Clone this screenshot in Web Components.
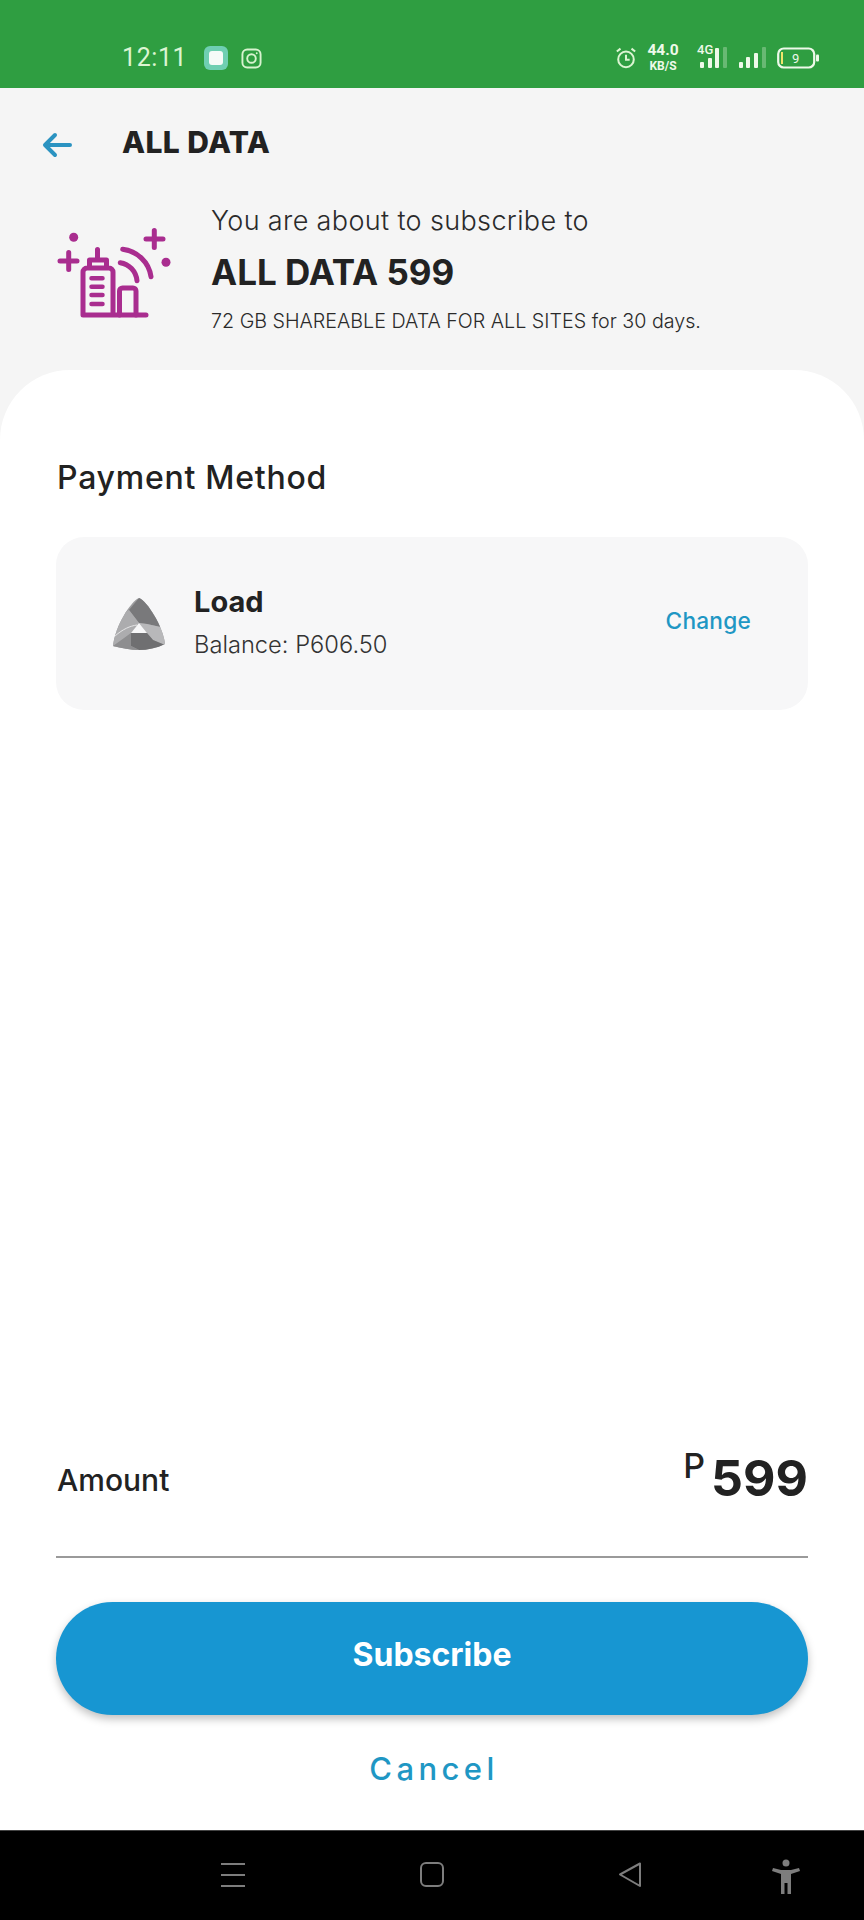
<!DOCTYPE html>
<html>
<head>
<meta charset="utf-8">
<style>
  html, body { margin: 0; padding: 0; background: #fff; }
  body { font-family: Inter, "Noto Sans", sans-serif; color: #222; }
  app-screen { width: 864px; height: 1920px; }
</style>
</head>
<body>

<app-screen>
  <status-bar slot="top"></status-bar>
  <page-header slot="top" title="ALL DATA"></page-header>
  <plan-summary slot="top">
    <span slot="intro">You are about to subscribe to</span>
    <span slot="name">ALL DATA 599</span>
    <span slot="detail">72 GB SHAREABLE DATA FOR ALL SITES for 30 days.</span>
  </plan-summary>
  <payment-card>
    <span slot="name">Load</span>
    <span slot="balance">Balance: P606.50</span>
    <span slot="action">Change</span>
  </payment-card>
  <amount-row slot="bottom" value="599"></amount-row>
  <subscribe-actions slot="bottom"></subscribe-actions>
  <nav-bar slot="nav"></nav-bar>
</app-screen>

<script>
class AppScreen extends HTMLElement {
  constructor() {
    super();
    this.attachShadow({ mode: 'open' });
    this.shadowRoot.innerHTML = `
      <style>
        :host { display: flex; flex-direction: column; background: #f5f5f5; overflow: hidden; }
        .sheet {
          flex: 1;
          display: flex;
          flex-direction: column;
          background: #fff;
          border-radius: 70px 70px 0 0;
          padding: 0 56px;
        }
        .sheet h2 {
          margin: 90px 0 41px 1px;
          font: 500 32px/36px Inter, sans-serif;
          letter-spacing: .75px;
          color: #222;
        }
        .fill { flex: 1; }
      </style>
      <slot name="top"></slot>
      <div class="sheet">
        <h2>Payment Method</h2>
        <slot></slot>
        <div class="fill"></div>
        <slot name="bottom"></slot>
      </div>
      <slot name="nav"></slot>
    `;
  }
}

class StatusBar extends HTMLElement {
  constructor() {
    super();
    this.attachShadow({ mode: 'open' });
    this.shadowRoot.innerHTML = `
      <style>
        :host {
          display: flex;
          align-items: center;
          height: 88px;
          box-sizing: border-box;
          padding: 28px 0 0 122px;
          background: #2f9e41;
          color: #dcf5d2;
        }
        .time { font: 400 25px/32px Roboto, sans-serif; letter-spacing: .6px; width: 82px; }
        svg { display: block; flex: none; }
        .right { margin-left: auto; display: flex; align-items: center; margin-right: 45px; }
        .speed { display: flex; flex-direction: column; align-items: center; margin: -2px 16px 0 10px; width: 32px; color: #eef9e9; }
        .speed b { font: 700 15.5px/18px Roboto, sans-serif; }
        .speed span { font: 700 12px/14px Roboto, sans-serif; }
        .net { position: relative; width: 32px; height: 22px; }
        .net span {
          position: absolute;
          left: 2px;
          top: -5px;
          font: 500 13px/16px Roboto, sans-serif;
          color: #eef9e9;
        }
      </style>
      <div class="time">12:11</div>
      <svg width="24" height="24" viewBox="0 0 24 24">
        <rect width="24" height="24" rx="6" fill="#6fcfb2"/>
        <rect x="5" y="5" width="14" height="14" rx="3" fill="#f6fbf8"/>
      </svg>
      <svg width="21" height="21" viewBox="0 0 22 22" fill="none" stroke="#d8f3cf" stroke-width="2" style="margin-left:13px">
        <rect x="1.500" y="1.500" width="19" height="19" rx="5"/>
        <circle cx="11" cy="11" r="4.500"/>
        <circle cx="16.500" cy="5.500" r="1" fill="#d8f3cf" stroke="none"/>
      </svg>
      <div class="right">
        <svg width="22" height="22" viewBox="0 0 23 24" fill="none" stroke="#dcf5d2" stroke-width="2.200">
          <circle cx="11.500" cy="13.500" r="8.500"/>
          <path d="M11.500 8.500v5.500h4M1.500 5l4-3.200M21.500 5l-4-3.200"/>
        </svg>
        <div class="speed"><b>44.0</b><span>KB/S</span></div>
        <div class="net">
          <svg width="32" height="22" viewBox="0 0 32 22" fill="#eef9e9">
            <rect x="5" y="15" width="4" height="6" rx="1"/>
            <rect x="13" y="11" width="4" height="10" rx="1"/>
            <rect x="20" y="1" width="4" height="20" rx="1"/>
            <rect x="28" y="0" width="4" height="21" rx="1" opacity=".3"/>
          </svg>
          <span>4G</span>
        </div>
        <svg width="27" height="22" viewBox="0 0 27 22" fill="#eef9e9" style="margin-left:12px">
          <rect x="0" y="15" width="4" height="6" rx="1"/>
          <rect x="7" y="10" width="4" height="11" rx="1"/>
          <rect x="15" y="6" width="4" height="15" rx="1"/>
          <rect x="23" y="0" width="4" height="21" rx="1" opacity=".3"/>
        </svg>
        <svg width="42" height="22" viewBox="0 0 42 22" style="margin-left:11px">
          <rect x="1.200" y="1.500" width="36" height="19" rx="5.500" fill="none" stroke="#eef9e9" stroke-width="2.200"/>
          <rect x="4" y="5" width="2" height="12" fill="#f2e56b"/>
          <rect x="39" y="7.500" width="3" height="7" rx="1" fill="#eef9e9"/>
          <text x="15" y="16" font-family="Roboto, sans-serif" font-size="13" fill="#eef9e9">9</text>
        </svg>
      </div>
    `;
  }
}

class PageHeader extends HTMLElement {
  constructor() {
    super();
    this.attachShadow({ mode: 'open' });
    this.shadowRoot.innerHTML = `
      <style>
        :host { display: flex; align-items: center; height: 108px; padding-left: 42px; box-sizing: border-box; }
        svg { display: block; margin-right: 50px; margin-top: 6px; }
        h1 { margin: 0; font: 800 30px/36px Inter, sans-serif; letter-spacing: .4px; color: #222; }
      </style>
      <svg width="30" height="26" viewBox="0 0 30 26" fill="none" stroke="#2b93c1" stroke-width="4" stroke-linecap="round" stroke-linejoin="round">
        <path d="M28 13H4M13 3L3 13l10 10"/>
      </svg>
      <h1>${this.getAttribute('title')}</h1>
    `;
  }
}

class PlanSummary extends HTMLElement {
  constructor() {
    super();
    this.attachShadow({ mode: 'open' });
    this.shadowRoot.innerHTML = `
      <style>
        :host { display: flex; height: 174px; box-sizing: border-box; padding: 0 0 0 57px; }
        svg { display: block; flex: none; margin-top: 32px; }
        .text { margin-left: 40px; display: flex; flex-direction: column; padding-top: 7px; }
        .intro { font: 300 27px/36px Inter, sans-serif; letter-spacing: .36px; color: #2a2a2a; }
        .name { font: 700 35px/42px Inter, sans-serif; margin-top: 12px; color: #222; }
        .detail { font: 300 19.7px/28px Inter, sans-serif; margin-top: 14px; color: #2a2a2a; }
      </style>
      <svg width="114" height="94" viewBox="0 0 114 94" fill="none" stroke="#a92d8f" stroke-width="5" stroke-linecap="round" stroke-linejoin="round">
        <circle cx="16.700" cy="9.300" r="4.500" fill="#a92d8f" stroke="none"/>
        <circle cx="109" cy="34.300" r="4.500" fill="#a92d8f" stroke="none"/>
        <path d="M3 33h17M11.700 24.500v17M89 11h17M97.300 2.500v17"/>
        <path d="M26 87V44a4 4 0 0 1 4-4h22a4 4 0 0 1 4 4v43M26 87H89M32.500 40v-8h17v8M40.500 32V21.500"/>
        <path d="M34.500 50.300h11M34.500 58.700h11M34.500 67h11M34.500 76h11" stroke-width="4.500"/>
        <path d="M62.500 87V63a3 3 0 0 1 3-3h10.500a3 3 0 0 1 3 3v24M63.300 34.700C72 36 79 43 80 52.700M65.700 21.300C80 23 92 34 94 48.700"/>
      </svg>
      <div class="text">
        <div class="intro"><slot name="intro"></slot></div>
        <div class="name"><slot name="name"></slot></div>
        <div class="detail"><slot name="detail"></slot></div>
      </div>
    `;
  }
}

class PaymentCard extends HTMLElement {
  constructor() {
    super();
    this.attachShadow({ mode: 'open' });
    this.shadowRoot.innerHTML = `
      <style>
        :host { display: flex; align-items: center; height: 173px; box-sizing: border-box; padding: 0 57px; background: #f7f7f8; border-radius: 28px; }
        svg { display: block; flex: none; margin-right: 29px; }
        .text { display: flex; flex-direction: column; flex: 1; margin-top: -3px; }
        .name { font: 700 29px/34px Inter, sans-serif; color: #222; }
        .balance { font: 300 23.7px/30px Inter, sans-serif; margin-top: 11px; color: #333; }
        .action { font: 500 22.7px/28px Inter, sans-serif; color: #1f97c4; letter-spacing: .2px; margin-top: -5px; }
      </style>
      <svg width="52" height="52" viewBox="0 0 52 52">
        <clipPath id="tri"><path d="M26 0C34 3 50 28 52 46 44 50 34 52 26 52 18 52 8 50 0 48 2 28 18 3 26 0Z"/></clipPath>
        <g clip-path="url(#tri)">
          <rect width="52" height="52" fill="#9c9c9e"/>
          <path d="M26 0H42L52 30 34 26 26 25 16 12Z" fill="#79797b"/>
          <path d="M16 12 26 25 18 35 0 50V20Z" fill="#acacae"/>
          <path d="M26 25 34 26 52 30V47L40 42 34 35Z" fill="#b8b8ba"/>
          <path d="M18 35H34L40 42 52 47V52H26L18 48Z" fill="#6f6f71"/>
          <path d="M0 48 18 35V48L26 52H0Z" fill="#8e8e90"/>
          <path d="M2 38C10 31 17 28 24 27" fill="none" stroke="#e4e4e5" stroke-width="1"/>
          <path d="M26 25 34 35H18Z" fill="#f7f7f8"/>
        </g>
      </svg>
      <div class="text">
        <div class="name"><slot name="name"></slot></div>
        <div class="balance"><slot name="balance"></slot></div>
      </div>
      <div class="action"><slot name="action"></slot></div>
    `;
  }
}

class AmountRow extends HTMLElement {
  constructor() {
    super();
    this.attachShadow({ mode: 'open' });
    this.shadowRoot.innerHTML = `
      <style>
        :host { display: flex; align-items: flex-start; height: 116px; box-sizing: border-box; border-bottom: 2px solid #9a9a9a; }
        .label { font: 500 30px/34px Inter, sans-serif; margin: 21px 0 0 1px; flex: 1; color: #222; }
        .cur { font: 500 34px/32px Inter, sans-serif; margin-top: 8px; margin-right: 6px; color: #222; }
        .value { font: 700 50px/60px Inter, sans-serif; margin-top: 6px; color: #222; }
      </style>
      <div class="label">Amount</div>
      <div class="cur">P</div>
      <div class="value">${this.getAttribute('value')}</div>
    `;
  }
}

class SubscribeActions extends HTMLElement {
  constructor() {
    super();
    this.attachShadow({ mode: 'open' });
    this.shadowRoot.innerHTML = `
      <style>
        :host { display: flex; flex-direction: column; padding-top: 44px; height: 272px; box-sizing: border-box; }
        button {
          flex: none;
          height: 113px;
          border: 0;
          border-radius: 57px;
          background: #1796d2;
          box-shadow: 0 4px 8px rgba(0,0,0,.25);
          color: #fff;
          font: 700 32px/38px Inter, sans-serif;
          padding: 0 0 8px;
        }
        .cancel { margin-top: 35px; padding-left: 4px; text-align: center; font: 500 31px/38px Inter, sans-serif; letter-spacing: 4.4px; color: #1f97c4; }
      </style>
      <button>Subscribe</button>
      <div class="cancel">Cancel</div>
    `;
  }
}

class NavBar extends HTMLElement {
  constructor() {
    super();
    this.attachShadow({ mode: 'open' });
    this.shadowRoot.innerHTML = `
      <style>
        :host { display: block; position: relative; height: 90px; background: #000; border-top: 1px solid #444; box-sizing: border-box; }
        svg { position: absolute; display: block; }
      </style>
      <svg style="left:220px;top:30px" width="26" height="26" viewBox="0 0 26 26" stroke="#7d7d7d" stroke-width="2"><path d="M1 3h24M1 14h24M1 25h24"/></svg>
      <svg style="left:420px;top:31px" width="24" height="26" viewBox="0 0 24 26" fill="none" stroke="#7d7d7d" stroke-width="2"><rect x="1" y="1" width="22" height="23" rx="5"/></svg>
      <svg style="left:618px;top:31px" width="24" height="26" viewBox="0 0 24 26" fill="none" stroke="#7d7d7d" stroke-width="2" stroke-linejoin="round"><path d="M22 1.500V24L2 12.500Z"/></svg>
      <svg style="left:772px;top:28px" width="28" height="36" viewBox="0 0 28 36" fill="#7d7d7d"><circle cx="14" cy="4" r="3.500"/><path d="M1 9 L9 11H19L27 9 28 12 19 15V35H15.500V24H12.500V35H9V15L0 12Z"/></svg>
    `;
  }
}

customElements.define('app-screen', AppScreen);
customElements.define('status-bar', StatusBar);
customElements.define('page-header', PageHeader);
customElements.define('plan-summary', PlanSummary);
customElements.define('payment-card', PaymentCard);
customElements.define('amount-row', AmountRow);
customElements.define('subscribe-actions', SubscribeActions);
customElements.define('nav-bar', NavBar);
</script>
</body>
</html>
